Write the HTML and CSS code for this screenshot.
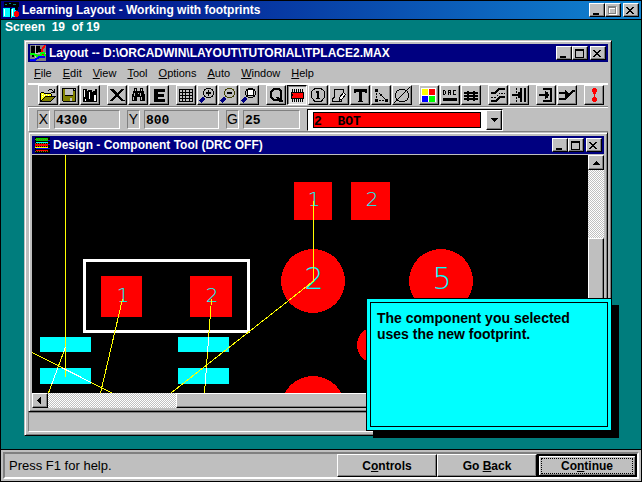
FILE: index.html
```html
<!DOCTYPE html>
<html lang="en">
<head>
<meta charset="utf-8">
<title>Learning Layout - Working with footprints</title>
<link rel="stylesheet" href="styles.css">
</head>
<body>
<div class="tutorial">
  <header class="titlebar titlebar-main">
    <svg class="title-icon" viewBox="0 0 16 16" aria-hidden="true"><path fill="#000" d="M1 0h15v5H1z"/><path fill="#008080" d="M2 2h2v1H2zM6 1h2v1H6zM10 2h3v1h-3z"/><path fill="#0ff" d="M0 6h6l1 1v9l-1-1H0zM8 7l1-1h4v9H9l-1 1z"/><path fill="#fff" d="M1 7h1v7H1zM9 7h1v7H9z"/><path fill="#000" d="M7 6h1v10H7zM12 5h3v3h-3z"/><path fill="red" d="M12 9h3v1h1v4h-1v1h-3v-1h-1v-4h1z"/></svg>
    <h1 class="title-text">Learning Layout - Working with footprints</h1>
    <div class="caption-buttons">
      <button class="caption" aria-label="Minimize"><svg viewBox="0 0 12 11"><path d="M3 8h6v2H3z"/></svg></button>
      <button class="caption" aria-label="Maximize" disabled><svg viewBox="0 0 12 11"><path fill="#fff" fill-rule="evenodd" d="M3 2h8v8H3zM4 4v5h6V4z"/><path fill="#808080" fill-rule="evenodd" d="M2 1h8v8H2zM3 3v5h6V3z"/></svg></button>
      <button class="caption caption-close" aria-label="Close"><svg viewBox="0 0 12 11"><path d="M2 2h2v1h1v1h2V3h1V2h2v1H9v1H8v1H7v1h1v1h1v1h1v1H8V8H7V7H5v1H4v1H2V8h1V7h1V6h1V5H4V4H3V3H2z"/></svg></button>
    </div>
  </header>

  <main class="stage">
    <p class="screen-label">Screen&nbsp; 19&nbsp; of 19</p>

    <section class="window window-app">
      <header class="titlebar">
        <svg class="title-icon" viewBox="0 0 16 16" aria-hidden="true"><path fill="#808080" d="M0 0h16v16H0z"/><path fill="#000" d="M1 1h9v3h1v3H8v2H4v3H2V9H1z"/><path stroke="#c0c0c0" fill="none" d="M0 8.500h16M5.500 0v16"/><path fill="none" stroke="red" stroke-width="2" d="M15 0l-3 5v3l3 3"/><path fill="none" stroke="#0f0" stroke-width="2" d="M0 9h4l3 2h3l2-3h2l1 2-2 2h-2"/><path fill="none" stroke="#00f" stroke-width="2" d="M0 15h5l4-3h6"/></svg>
        <h2 class="title-text">Layout -- D:\ORCADWIN\LAYOUT\TUTORIAL\TPLACE2.MAX</h2>
        <div class="caption-buttons">
          <button class="caption" aria-label="Minimize"><svg viewBox="0 0 12 11"><path d="M3 8h6v2H3z"/></svg></button>
          <button class="caption" aria-label="Maximize"><svg viewBox="0 0 12 11"><path fill-rule="evenodd" d="M2 1h9v9H2zM3 3v6h7V3z"/></svg></button>
          <button class="caption caption-close" aria-label="Close"><svg viewBox="0 0 12 11"><path d="M2 2h2v1h1v1h2V3h1V2h2v1H9v1H8v1H7v1h1v1h1v1h1v1H8V8H7V7H5v1H4v1H2V8h1V7h1V6h1V5H4V4H3V3H2z"/></svg></button>
        </div>
      </header>

      <nav class="menubar">
        <button><u>F</u>ile</button><button><u>E</u>dit</button><button><u>V</u>iew</button><button><u>T</u>ool</button><button><u>O</u>ptions</button><button><u>A</u>uto</button><button><u>W</u>indow</button><button><u>H</u>elp</button>
      </nav>

      <div class="toolbar">
        <div class="tools">
          <button aria-label="Open"><svg viewBox="0 0 16 16"><path d="M9 2h3v1H9zM12 3h1v1h-1zM14 2h1v4h-4V5h2V4h1zM8 3h1v1H8zM1 5h3v1H1zM4 6h7v1H4zM0 6h1v9H0zM11 7h1v2h-1z"/><path fill="#ff0" d="M1 6h3v1h7v2H5v1H4v1H3v1H2v2H1z"/><path fill="#fff" d="M2 7h1v1H2zM4 8h1v1H4zM6 7h1v1H6zM8 8h1v1H8zM2 9h1v1H2z"/><path d="M5 9h11v1h-1v1h-1v1h-1v1h-1v1h-1v1H0v-1h1v-1h1v-1h1v-1h1v-1h1z"/><path fill="#808000" d="M5 10h9v1h-1v1h-1v1h-1v1H2v-1h1v-1h1v-1h1z"/></svg></button>
          <button aria-label="Save"><svg viewBox="0 0 16 16"><path d="M1 1h14v14H2v-1H1z"/><path fill="#808000" d="M2 2h2v7h8V4h2v10H2z"/><path fill="#c0c0c0" d="M4 2h8v6H4zM13 2h1v1h-1zM9 11h2v3H9z"/></svg></button>
          <button aria-label="Library"><svg viewBox="0 0 16 16"><path d="M1 2h4v2h1v11H1zM6 3h4v2h1v10H6zM11 2h4v13h-4z"/><path fill="#fff" d="M2 3h1v7H2zM7 5h1v7H7zM12 8h2v6h-2zM3 12h1v2H3z"/><path fill="#c0c0c0" d="M5 2h1v2H5zM10 2h1v3h-1zM11 2h2v2h-2z"/></svg></button>
        </div>
        <div class="tools">
          <button aria-label="Delete"><svg viewBox="0 0 16 16"><path d="M1 2h4v1h1v1h1v1h1v1h1V5h1V4h1V3h1V2h3v1h-1v1h-1v1h-1v1h-1v1h-1v2h1v1h1v1h1v1h1v1h2v1h-4v-1h-1v-1h-1v-1H9v-1H7v1H6v1H5v1H4v1H1v-1h1v-1h1v-1h1v-1h1v-1h1V7H5V6H4V5H3V4H2V3H1z"/></svg></button>
          <button aria-label="Find"><svg viewBox="0 0 16 16"><path d="M4 1h3v3h3V1h3v3h1v3h1v7h-5v-4H7v4H2V7h1V4h1z"/><path fill="#c0c0c0" d="M5 2h1v2H5zM11 2h1v2h-1zM4 6h1v3H4zM3 10h1v3H3zM10 6h1v3h-1zM11 10h1v3h-1zM8 6h1v1H8z"/></svg></button>
          <button aria-label="Edit"><svg viewBox="0 0 16 16"><path d="M3 2h11v3H7v2h6v3H7v2h7v3H3z"/></svg></button>
        </div>
        <div class="tools">
          <button aria-label="Spreadsheet"><svg viewBox="0 0 16 16"><path fill="none" stroke="#000" d="M1.500 2.500h13v12h-13zM1 5.500h14M1 8.500h14M1 11.500h14M4.500 2v13M7.500 2v13M11.500 2v13"/></svg></button>
          <button aria-label="Zoom in"><svg viewBox="0 0 16 16"><path stroke="#000080" stroke-width="3" d="M1 15l4-4"/><path fill="#000" fill-rule="evenodd" d="M7 1h5v1h2v2h1v4h-1v2h-2v1H7v-1H5V8H4V4h1V2h2zM7 2v1H6v1H5v4h1v1h1v1h5V9h1V8h1V4h-1V3h-1V2z"/><path d="M9 3h1v2h2v2h-2v2H9V7H7V5h2z"/></svg></button>
          <button aria-label="Zoom out"><svg viewBox="0 0 16 16"><path stroke="#000080" stroke-width="3" d="M1 15l4-4"/><path fill="#404000" fill-rule="evenodd" d="M7 1h5v1h2v2h1v4h-1v2h-2v1H7v-1H5V8H4V4h1V2h2zM7 2v1H6v1H5v4h1v1h1v1h5V9h1V8h1V4h-1V3h-1V2z"/><path d="M7 5h5v2H7z"/></svg></button>
          <button aria-label="Zoom all"><svg viewBox="0 0 16 16"><path stroke="#000080" stroke-width="3" d="M1 15l4-4"/><path fill="#000" fill-rule="evenodd" d="M7 1h5v1h2v2h1v4h-1v2h-2v1H7v-1H5V8H4V4h1V2h2zM7 2v1H6v1H5v4h1v1h1v1h5V9h1V8h1V4h-1V3h-1V2z"/><path fill="#fff" stroke="#000" d="M6.500 2.500h6v6h-6z"/></svg></button>
        </div>
        <div class="tools">
          <button aria-label="Query"><svg viewBox="0 0 16 16"><path fill-rule="evenodd" d="M5 1h6l3 3v7l-1 1 2 2-1 1h-2l-2-1H5l-3-3V4zM6 3L4 5v5l2 2h3l-1-2h2l1 1 1-1V5l-2-2z"/></svg></button>
          <button class="pressed" aria-label="Component"><svg viewBox="0 0 16 16"><path stroke="#000" d="M3.500 2v13M5.500 2v13M7.500 2v13M9.500 2v13M11.500 2v13M13.500 2v13"/><path fill="#000" d="M2 5h13v7H2z"/><path fill="red" d="M3 6h11v5H3z"/><path fill="#000" d="M2 7h2v2H2z"/></svg></button>
          <button aria-label="Pin"><svg viewBox="0 0 16 16"><path fill="none" stroke="#000" d="M5 1.500h6l3.500 3v6l-3.500 4H5l-3.500-4v-6z"/><path d="M6 4h3v7h1v1H6v-1h1V6H6z"/></svg></button>
          <button aria-label="Obstacle"><svg viewBox="0 0 16 16"><path fill="none" stroke="#000" d="M3.500 2.500h9v3M3.500 2v8l-2 2v2h8.500v-3"/><path fill="#fff" stroke="#000" d="M12.500 5.500l2 2-3 4-3 2v-3z"/></svg></button>
          <button aria-label="Text"><svg viewBox="0 0 16 16"><path d="M2 2h13v4h-2V5h-3v9h1v1H6v-1h1V5H4v1H2z"/></svg></button>
          <button aria-label="Connection"><svg viewBox="0 0 16 16"><path fill="none" stroke="#000" stroke-dasharray="2 1" d="M3.500 3v10M3 13.500h10M4 4l9 9"/><path d="M2 2h3v3H2zM2 12h3v3H2zM12 12h3v3h-3zM7 7h2v2H7z"/></svg></button>
          <button aria-label="Error"><svg viewBox="0 0 16 16"><path d="M5 2h6v1H5zM3 3h2v1H3zM11 3h2v1h-2zM2 4h1v2H2zM13 4h1v2h-1zM1 6h1v5H1zM14 6h1v5h-1zM2 11h1v2H2zM13 11h1v2h-1zM3 13h2v1H3zM11 13h2v1h-2zM5 14h6v1H5z"/><path stroke="#000" d="M0 16L16 0"/></svg></button>
        </div>
        <div class="tools">
          <button aria-label="Color"><svg viewBox="0 0 16 16"><path fill="#fff" d="M0 1h15v14H0z"/><path fill="#ff0" d="M1 2h6v6H1z"/><path fill="red" d="M8 2h6v6H8z"/><path fill="#00f" d="M1 9h6v6H1z"/><path fill="#0f0" d="M8 9h6v6H8z"/></svg></button>
          <button aria-label="Online DRC"><svg viewBox="0 0 16 16"><path fill="none" stroke="#000" d="M1.500 3v5M1 3.500h2M1 7.500h2M3.500 4v3M6.500 3v5M6 3.500h3M8.500 3v3M6 5.500h2M8.500 6v2M14 3.500h-2M11.500 3v5M11 7.500h3"/><path d="M1 11h14v3H1z"/></svg></button>
          <button aria-label="Reconnect"><svg viewBox="0 0 16 16"><path d="M4 4h8v10H4zM1 5h14v2H1zM1 8h14v2H1zM1 11h14v2H1z"/><path fill="#c0c0c0" d="M6 4h4v1H6zM6 7h4v1H6zM6 10h4v1H6zM6 13h4v1H6z"/></svg></button>
        </div>
        <div class="tools">
          <button aria-label="Auto path"><svg viewBox="0 0 16 16"><path fill="none" stroke="#000" stroke-width="2" d="M1 6h4l4-4h6M1 14h5l4-4h5"/><path fill="none" stroke="#000" stroke-dasharray="2 1" d="M1 10h5l4-4h5"/></svg></button>
          <button aria-label="Shove track"><svg viewBox="0 0 16 16"><path fill="none" stroke="#000" stroke-width="2" d="M10 1v14M14 1v14M1 8h9"/><path fill="none" stroke="#000" stroke-dasharray="2 1" d="M5.500 1v14"/><path d="M7 5h1l4 3-4 3H7z"/></svg></button>
        </div>
        <div class="tools">
          <button aria-label="Edit segment"><svg viewBox="0 0 16 16"><path fill="none" stroke="#000" stroke-width="2" d="M5 2h8v12H5M1 8h8M9 5v6"/><path d="M7 4l5 4-5 4z"/></svg></button>
          <button aria-label="Add route"><svg viewBox="0 0 16 16"><path fill="none" stroke="#000" stroke-width="2" d="M0 6h7M0 12h6l8-8h2"/><path d="M6 3l4 3-4 4z"/></svg></button>
        </div>
        <div class="tools">
          <button aria-label="Refresh"><svg viewBox="0 0 16 16"><path fill="red" d="M7 1h3v1h1v3h-1v2H9v3h1v1h1v3h-1v1H7v-1H6v-3h1v-1h1V7H7V5H6V2h1z"/></svg></button>
        </div>
      </div>

      <div class="coords">
        <label class="sunken tag" for="cx">X</label><input class="sunken value" id="cx" value="4300">
        <label class="sunken tag" for="cy">Y</label><input class="sunken value value-y" id="cy" value="800">
        <label class="sunken tag" for="cg">G</label><input class="sunken value value-g" id="cg" value="25">
        <div class="layer">
          <select aria-label="Layer"><option>2&nbsp; BOT</option></select>
          <span class="bevel drop" aria-hidden="true"><svg viewBox="0 0 8 8"><path d="M1 2h7v1H7v1H6v1H5v1H4V5H3V4H2V3H1z"/></svg></span>
        </div>
      </div>

      <section class="window window-design">
        <header class="titlebar">
          <svg class="title-icon" viewBox="0 0 16 16" aria-hidden="true"><path fill="#000" d="M1 0h15v16H1z"/><path fill="#0c0" d="M2 1h12v3H2z"/><path fill="#0ff" d="M2 5h12v1H2z"/><path fill="red" d="M1 7h13v2H1zM2 13h12v1H2z"/><path fill="#ff0" d="M1 10h13v1H1z"/><path fill="#00f" d="M2 11h14v1H2zM14 3h2v1h-2zM14 7h2v1h-2z"/><path stroke="#808000" stroke-dasharray="1 1" d="M1 2.500h13M1 6.500h13M1 9.500h13M1 14.500h13"/></svg>
          <h2 class="title-text">Design - Component Tool (DRC OFF)</h2>
          <div class="caption-buttons">
            <button class="caption" aria-label="Minimize"><svg viewBox="0 0 12 11"><path d="M3 8h6v2H3z"/></svg></button>
            <button class="caption" aria-label="Maximize"><svg viewBox="0 0 12 11"><path fill-rule="evenodd" d="M2 1h9v9H2zM3 3v6h7V3z"/></svg></button>
            <button class="caption caption-close" aria-label="Close"><svg viewBox="0 0 12 11"><path d="M2 2h2v1h1v1h2V3h1V2h2v1H9v1H8v1H7v1h1v1h1v1h1v1H8V8H7V7H5v1H4v1H2V8h1V7h1V6h1V5H4V4H3V3H2z"/></svg></button>
          </div>
        </header>
        <div class="viewport">
          <div class="board">
            <svg class="drawing" aria-label="Board">
              <defs><clipPath id="pads"><path d="M8 182h51v15H8zM8 213h51v16H8zM146 182h51v15h-51zM146 213h51v16h-51z"/></clipPath></defs>
              <path fill="red" d="M262 27h38v38h-38zM319 27h39v38h-39zM69 121h41v41H69zM158 121h42v41h-42z"/>
              <circle fill="red" cx="281" cy="126" r="32"/><circle fill="red" cx="409" cy="126" r="32"/>
              <circle fill="red" cx="343" cy="190" r="18"/><circle fill="red" cx="281" cy="253" r="32"/>
              <path fill="#0ff" d="M8 182h51v15H8zM8 213h51v16H8zM146 182h51v15h-51zM146 213h51v16h-51z"/>
              <path fill="none" stroke="#fff" stroke-width="3" d="M52.500 105.500h164v71h-164z"/>
              <g class="pin-small"><text x="282" y="51">1</text><text x="340" y="51">2</text><text x="91" y="147">1</text><text x="180" y="147">2</text></g>
              <g class="pin-large"><text x="282" y="134">2</text><text x="410" y="134">5</text></g>
              <path fill="none" stroke="#ff0" d="M33.500 0v222M90.500 144L68.500 238M179.500 144L172.500 238M281.500 46v80L139 238M0 197.500L80 238M33.500 192L16.500 238"/>
              <path fill="none" stroke="#fff" clip-path="url(#pads)" d="M179.500 144L172.500 238M0 197.500L80 238M33.500 192L16.500 238"/>
            </svg>
          </div>
          <div class="scroll scroll-v"><button class="bevel" aria-label="Scroll up"><svg viewBox="0 0 8 8"><path d="M4 2h1v1h1v1h1v1h1v1H1V5h1V4h1V3h1z"/></svg></button><span class="track"></span><span class="bevel thumb"></span></div>
          <div class="scroll scroll-h"><button class="bevel" aria-label="Scroll left"><svg viewBox="0 0 8 8"><path d="M5 0v7H4V6H3V5H2V4H1V3h1V2h1V1h1V0z"/></svg></button><span class="track"></span><span class="bevel thumb"></span></div>
        </div>
      </section>
      <div class="status-strip"></div>
    </section>

    <aside class="callout"><p>The component you selected<br>uses the new footprint.</p></aside>
  </main>

  <footer class="footer">
    <div class="footer-panel">
      <p class="hint">Press F1 for help.</p>
      <button class="push">C<u>o</u>ntrols</button>
      <button class="push">Go <u>B</u>ack</button>
      <button class="push push-default"><span>Co<u>n</u>tinue</span></button>
    </div>
  </footer>
</div>
</body>
</html>
```
FILE: styles.css
```css
:root {
  --face: #bfbfbf;
  --shade: #808080;
  --teal: #007d7d;
  --navy: #000080;
}

* { box-sizing: border-box; }

body {
  margin: 0;
  font-family: "Liberation Sans", Arial, sans-serif;
  font-size: 12px;
  color: #000;
}

h1, h2, p { margin: 0; }

button, input, select { font: inherit; color: inherit; border-radius: 0; padding: 0; margin: 0; }

u { text-underline-offset: 1px; text-decoration-thickness: 1px; }

svg { display: block; shape-rendering: crispEdges; }

.tutorial {
  display: flex;
  flex-direction: column;
  min-height: 100vh;
  border: 1px solid #000;
  background: var(--teal);
}

/* Title bars */
.titlebar {
  display: flex;
  align-items: center;
  flex: none;
  height: 18px;
  padding: 0 2px;
  gap: 3px;
  background: var(--navy);
  color: #fff;
}
.titlebar-main {
  height: 19px;
  border-bottom: 1px solid #000;
  background: linear-gradient(90deg, #000080, #1084d0);
}
.title-icon { width: 16px; height: 16px; flex: none; }
.title-text { flex: 1; font-size: 12px; line-height: 16px; font-weight: bold; white-space: nowrap; }

.caption-buttons { display: flex; }
.caption {
  width: 16px;
  height: 14px;
  border: 1px solid;
  border-color: #fff #000 #000 #fff;
  box-shadow: inset -1px -1px var(--shade);
  background: var(--face);
}
.caption svg { width: 12px; height: 11px; }
.caption-close { margin-left: 2px; }

/* Stage and framed windows */
.stage {
  position: relative;
  display: flex;
  flex-direction: column;
  flex: 1;
  padding: 0 29px 13px 23px;
}
.screen-label {
  height: 20px;
  margin-left: -19px;
  line-height: 14px;
  font-weight: bold;
  color: #fff;
}
.window {
  display: flex;
  flex-direction: column;
  flex: 1;
  padding: 3px;
  border: 1px solid;
  border-color: var(--face) #000 #000 var(--face);
  box-shadow: inset 1px 1px #fff, inset -1px -1px var(--shade);
  background: var(--face);
}

.menubar { display: flex; gap: 11px; height: 21px; padding-left: 6px; font-size: 11px; }
.menubar button { border: 0; background: none; }

/* Toolbar */
.toolbar {
  display: flex;
  gap: 7px;
  height: 24px;
  padding-left: 10px;
  border-top: 2px solid #fff;
  border-bottom: 1px solid var(--shade);
  overflow: hidden;
}
.tools { display: flex; gap: 1px; flex: none; }
.tools button {
  width: 20px;
  height: 20px;
  padding: 1px;
  border: 1px solid;
  border-color: #fff #000 #000 #fff;
  box-shadow: inset -1px -1px var(--shade);
  background: var(--face);
}
.tools svg { width: 16px; height: 16px; }
.tools .pressed {
  border-color: #000 #fff #fff #000;
  box-shadow: inset 1px 1px var(--shade);
  background: #e0e0e0;
}

/* Coordinate fields */
.coords {
  display: flex;
  align-items: center;
  height: 25px;
  padding-left: 8px;
  border-top: 1px solid #fff;
  border-left: 1px solid #fff;
  border-bottom: 1px solid var(--shade);
}
.sunken {
  height: 19px;
  border: 1px solid;
  border-color: var(--shade) #fff #fff var(--shade);
  background: var(--face);
}
.tag { width: 13px; margin-right: 4px; font-size: 14px; line-height: 17px; text-align: center; }
.value { width: 66px; margin-right: 7px; padding: 2px 0 0 1px; font: bold 13px "Liberation Mono", monospace; }
.value-y { width: 75px; }
.value-g { width: 57px; }
.layer {
  display: flex;
  gap: 1px;
  height: 22px;
  width: 196px;
  border: 1px solid;
  border-color: #000 #fff #fff #000;
  background: #fff;
}
.layer select {
  flex: 1;
  margin: 2px 4px 2px 5px;
  padding-top: 1px;
  appearance: none;
  border: 1px solid #000;
  background: red;
  font: bold 13px "Liberation Mono", monospace;
}
.drop { width: 16px; }

.bevel {
  display: flex;
  align-items: center;
  justify-content: center;
  border: 1px solid;
  border-color: #fff #000 #000 #fff;
  box-shadow: inset -1px -1px var(--shade);
  background: var(--face);
}
.bevel svg { width: 8px; height: 8px; }

/* Design window */
.viewport {
  display: grid;
  grid-template: 1fr 15px / 1fr 16px;
  flex: 1;
  margin-top: 1px;
}
.board { background: #000; overflow: hidden; min-height: 238px; }
.drawing { width: 100%; height: 100%; }
.pin-small, .pin-large {
  fill: #0ff;
  font-family: "DejaVu Sans Light", "DejaVu Sans", sans-serif;
  font-weight: 200;
  text-anchor: middle;
}
.pin-small { font-size: 20px; }
.pin-large { font-size: 30px; }

.scroll { display: flex; }
.scroll-v { flex-direction: column; }
.scroll-h { grid-column: 1 / 3; }
.scroll button { width: 16px; height: 15px; }
.scroll .track { background: repeating-conic-gradient(#fff 0 25%, var(--face) 0 50%) 0 0 / 2px 2px; }
.scroll-v .track { height: 68px; }
.scroll-h .track { width: 128px; }
.thumb { flex: 1; }

.status-strip {
  height: 20px;
  border: 1px solid;
  border-color: var(--shade) #fff #fff var(--shade);
}

/* Message over the lesson */
.callout {
  position: absolute;
  right: 29px;
  bottom: 18px;
  width: 246px;
  height: 133px;
  padding: 3px;
  border: 1px solid #000;
  background: #0ff;
  box-shadow: 7px 7px #000;
}
.callout p {
  height: 100%;
  padding: 7px 6px;
  border: 1px solid #000;
  font-size: 14px;
  line-height: 16px;
  font-weight: bold;
}

/* Footer */
.footer {
  padding: 2px;
  border-top: 1px solid #000;
  background: var(--face);
}
.footer-panel {
  display: flex;
  height: 27px;
  border: 2px solid;
  border-color: var(--shade) #fff #fff var(--shade);
}
.hint { flex: 1; padding-left: 4px; font-size: 13px; line-height: 23px; }
.push {
  width: 100px;
  border: 1px solid;
  border-color: #fff #000 #000 #fff;
  box-shadow: inset -1px -1px var(--shade);
  background: var(--face);
  font-weight: bold;
}
.push-default { padding: 2px; border: 2px solid #000; box-shadow: inset 1px 1px #fff, inset -1px -1px var(--shade); }
.push-default span { display: block; border: 1px dotted #000; }
```
